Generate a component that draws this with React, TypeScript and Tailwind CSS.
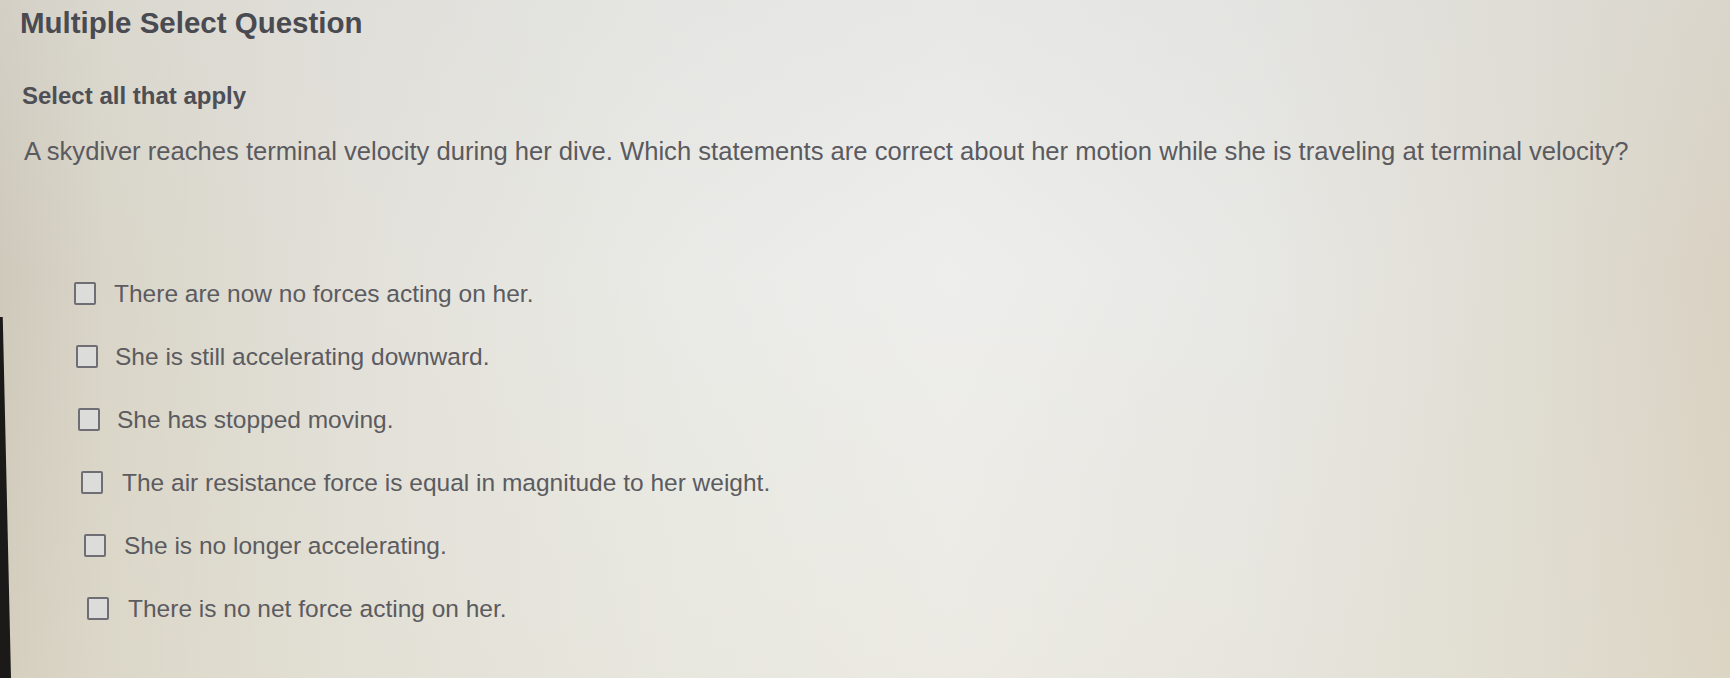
import React from "react";

const options: { text: string; ml: string; gap: string }[] = [
  { text: "There are now no forces acting on her.", ml: "ml-[74px]", gap: "gap-[18px]" },
  { text: "She is still accelerating downward.", ml: "ml-[76px]", gap: "gap-[17px]" },
  { text: "She has stopped moving.", ml: "ml-[78px]", gap: "gap-[17px]" },
  { text: "The air resistance force is equal in magnitude to her weight.", ml: "ml-[81px]", gap: "gap-[19px]" },
  { text: "She is no longer accelerating.", ml: "ml-[84px]", gap: "gap-[18px]" },
  { text: "There is no net force acting on her.", ml: "ml-[87px]", gap: "gap-[19px]" },
];

function Checkbox() {
  return (
    <span className="block w-[22px] h-[23px] shrink-0 rounded-[2px] border-2 border-[#6e6e74] bg-[#dcdcda]" />
  );
}

export default function App() {
  return (
    <div
      className="relative w-[1730px] h-[678px] overflow-hidden bg-[linear-gradient(90deg,#cfc9bb_0%,#d9d5c8_6%,#e2e0d9_20%,#eaebe7_40%,#eeeeec_55%,#e8e8e5_72%,#e0ddd3_88%,#d9d2c3_100%)] font-['Liberation_Sans',Arial,sans-serif]"
    >
      <div className="absolute inset-0 bg-[linear-gradient(180deg,rgba(220,220,218,0.35)_0%,rgba(240,240,238,0)_40%,rgba(228,222,200,0.25)_100%)]" />
      <div className="relative flex flex-col">
        <h1 className="ml-[20px] mt-[6px] h-[34px] leading-[34px] text-[29.5px] font-bold text-[#4a4a51]">
          Multiple Select Question
        </h1>
        <div className="ml-[22px] mt-[41px] h-[30px] leading-[30px] text-[24px] font-bold text-[#4e4e55]">
          Select all that apply
        </div>
        <p className="ml-[24px] mt-[25px] h-[30px] leading-[30px] text-[25.6px] text-[#5a5a5f] whitespace-nowrap">
          A skydiver reaches terminal velocity during her dive. Which statements are correct about her motion while she is traveling at terminal velocity?
        </p>
        <div className="mt-[96px] flex flex-col">
          {options.map((o, i) => (
            <label key={i} className={`flex items-center h-[63px] ${o.ml} ${o.gap}`}>
              <Checkbox />
              <span className="text-[24.5px] leading-[30px] text-[#5b5b60] whitespace-nowrap">{o.text}</span>
            </label>
          ))}
        </div>
      </div>
      <div className="absolute left-0 top-[317px] w-[11px] h-[361px] bg-[#1b1a18] [clip-path:polygon(0_0,25%_0,100%_100%,0_100%)]" />
    </div>
  );
}
